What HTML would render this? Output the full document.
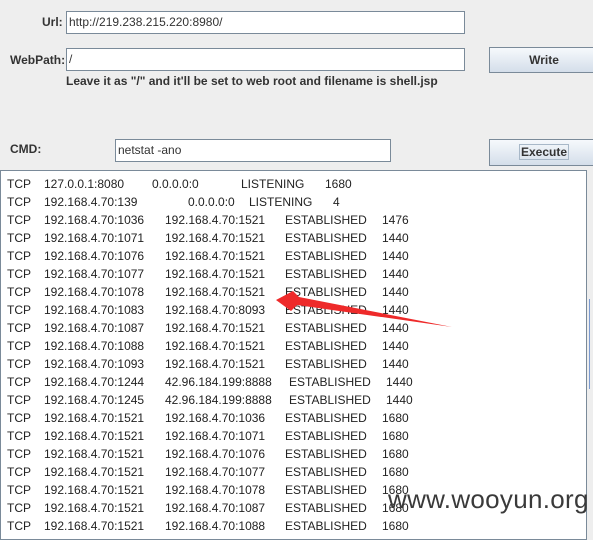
<!DOCTYPE html>
<html><head><style>
body{margin:0;width:593px;height:529px;background:#eeeeee;position:relative;overflow:hidden;font-family:"Liberation Sans",sans-serif;font-size:12px;color:#333}
.a{position:absolute;white-space:pre}
.b{font-weight:bold;color:#333}
.inp{position:absolute;background:#fff;border:1px solid #7a8a99;box-sizing:border-box;padding-left:2px;line-height:20px}
.btn{position:absolute;border:1px solid #7a8a99;box-sizing:border-box;background:linear-gradient(#f6f9fc,#d4deea);text-align:center;font-weight:bold;color:#333;line-height:22px}
#ta{position:absolute;left:0;top:170px;width:587px;height:370px;background:#fff;border:1px solid #7a8a99;box-sizing:border-box}
.r{position:absolute;left:0;height:18px;line-height:18px;color:#222}
.r span{position:absolute;white-space:pre}
</style></head><body>
<div class="a b" style="left:42px;top:15px">Url:</div>
<div class="inp" style="left:66px;top:11px;width:399px;height:23px">http://219.238.215.220:8980/</div>
<div class="a b" style="left:10px;top:53px">WebPath:</div>
<div class="inp" style="left:66px;top:48px;width:399px;height:23px">/</div>
<div class="a b" style="left:66px;top:74px">Leave it as "/" and it'll be set to web root and filename is shell.jsp</div>
<div class="btn" style="left:489px;top:47px;width:110px;height:26px;line-height:24px">Write</div>
<div class="a b" style="left:10px;top:142px">CMD:</div>
<div class="inp" style="left:115px;top:139px;width:276px;height:23px">netstat -ano</div>
<div class="btn" style="left:489px;top:139px;width:110px;height:27px;line-height:25px"><span style="border:1px solid #a8b8c8;padding:0 1px">Execute</span></div>
<div id="ta">
<div style="position:absolute;right:-7px;top:128px;width:3px;height:90px;border-left:1px solid #7a9ad0"></div>
</div>
<div id="rows" style="position:absolute;left:7px;top:175px"></div>
<div class="a" style="left:388px;top:484px;font-size:26px;color:#3a3a3a;letter-spacing:0.3px">www.wooyun.org</div>
<svg style="position:absolute;left:0;top:0" width="593" height="529"><polygon points="276,300 293,291 299,297 452,327 297,305 291,311" fill="#ee2a2a"/></svg>
<script>
var R=[
["127.0.0.1:8080",37,"0.0.0.0:0",145,"LISTENING",234,"1680",318],
["192.168.4.70:139",37,"0.0.0.0:0",181,"LISTENING",242,"4",326]];
var L=[["1036","1521","1476"],["1071","1521","1440"],["1076","1521","1440"],["1077","1521","1440"],["1078","1521","1440"],["1083","8093","1440"],["1087","1521","1440"],["1088","1521","1440"],["1093","1521","1440"]];
L.forEach(function(x){R.push(["192.168.4.70:"+x[0],37,"192.168.4.70:"+x[1],158,"ESTABLISHED",278,x[2],375]);});
["1244","1245"].forEach(function(p){R.push(["192.168.4.70:"+p,37,"42.96.184.199:8888",158,"ESTABLISHED",282,"1440",379]);});
["1036","1071","1076","1077","1078","1087","1088"].forEach(function(p){R.push(["192.168.4.70:1521",37,"192.168.4.70:"+p,158,"ESTABLISHED",278,"1680",375]);});
var h="";R.forEach(function(r,i){h+='<div class="r" style="top:'+(i*18)+'px"><span style="left:0">TCP</span><span style="left:'+r[1]+'px">'+r[0]+'</span><span style="left:'+r[3]+'px">'+r[2]+'</span><span style="left:'+r[5]+'px">'+r[4]+'</span><span style="left:'+r[7]+'px">'+r[6]+'</span></div>';});
document.getElementById("rows").innerHTML=h;
</script>
</body></html>
